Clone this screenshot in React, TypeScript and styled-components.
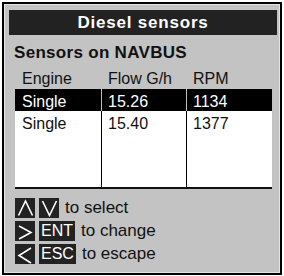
import React from "react";
import styled, { createGlobalStyle } from "styled-components";

const GlobalStyle = createGlobalStyle`
  html, body {
    margin: 0;
    padding: 0;
    background: #ffffff;
  }
  body {
    font-family: "Liberation Sans", Arial, sans-serif;
  }
`;

const COLS = "86px 85px 86px";

const Frame = styled.div`
  box-sizing: border-box;
  margin: 2px 0 0 2px;
  width: 280px;
  height: 273px;
  border: 2px solid #000;
  background: #c3c3c3;
  box-shadow: inset 0 0 0 1px #e4e4e4;
  padding: 6px 3px 0 5px;
  display: flex;
  flex-direction: column;
`;

const TitleBar = styled.div`
  height: 25px;
  background: #222;
  color: #fff;
  font-weight: bold;
  font-size: 17px;
  letter-spacing: 0.8px;
  display: flex;
  align-items: center;
  justify-content: center;
`;

const Heading = styled.div`
  margin: 8px 0 0 5px;
  font-size: 17px;
  font-weight: bold;
  letter-spacing: 0.3px;
  line-height: 20px;
  color: #111;
`;

const HeaderRow = styled.div`
  display: grid;
  grid-template-columns: ${COLS};
  margin: 7px 5px 0 6px;
  height: 19px;
  font-size: 16px;
  line-height: 18px;
  color: #111;
`;

const HeaderCell = styled.div`
  padding-left: 7px;
`;

const Table = styled.div`
  box-sizing: border-box;
  margin: 0 5px 0 6px;
  height: 100px;
  background: #fff;
  border-bottom: 2px solid #111;
  display: flex;
  flex-direction: column;
`;

const Row = styled.div<{ $selected?: boolean; $fill?: boolean }>`
  display: grid;
  grid-template-columns: ${COLS};
  height: ${(p) => (p.$fill ? "auto" : "22px")};
  flex: ${(p) => (p.$fill ? 1 : "none")};
  background: ${(p) => (p.$selected ? "#000" : "#fff")};
  color: ${(p) => (p.$selected ? "#fff" : "#111")};
  font-size: 16px;
  line-height: 18px;
`;

const Cell = styled.div<{ $first?: boolean; $selected?: boolean }>`
  padding: 4px 0 0 ${(p) => (p.$first ? "7px" : "6px")};
  border-left: ${(p) =>
    p.$first ? "none" : `1px solid ${p.$selected ? "#bdbdbd" : "#000"}`};
`;

const Legend = styled.div`
  margin: 9px 0 0 6px;
  display: flex;
  flex-direction: column;
  gap: 3px;
`;

const LegendRow = styled.div`
  display: flex;
  align-items: center;
  gap: 4px;
  height: 20px;
`;

const Key = styled.div`
  box-sizing: border-box;
  min-width: 20px;
  height: 20px;
  padding: 0 2px;
  background: #222;
  color: #fff;
  font-size: 16px;
  line-height: 20px;
  display: flex;
  align-items: center;
  justify-content: center;
`;

const IconKey = styled(Key)`
  padding: 0;
  width: 20px;
`;

const LegendText = styled.span`
  margin-left: 2px;
  font-size: 17px;
  line-height: 20px;
  color: #111;
`;

const Chevron: React.FC<{ points: string }> = ({ points }) => (
  <svg width="20" height="20" viewBox="0 0 20 20" style={{ display: "block" }}>
    <polyline
      points={points}
      fill="none"
      stroke="#fff"
      strokeWidth="1.6"
      strokeLinejoin="miter"
    />
  </svg>
);

const rows = [
  { engine: "Single", flow: "15.26", rpm: "1134", selected: true },
  { engine: "Single", flow: "15.40", rpm: "1377", selected: false },
];

export default function App() {
  return (
    <>
      <GlobalStyle />
      <Frame>
        <TitleBar>Diesel sensors</TitleBar>
        <Heading>Sensors on NAVBUS</Heading>
        <HeaderRow>
          <HeaderCell>Engine</HeaderCell>
          <HeaderCell>Flow G/h</HeaderCell>
          <HeaderCell>RPM</HeaderCell>
        </HeaderRow>
        <Table>
          {rows.map((r, i) => (
            <Row key={i} $selected={r.selected}>
              <Cell $first $selected={r.selected}>{r.engine}</Cell>
              <Cell $selected={r.selected}>{r.flow}</Cell>
              <Cell $selected={r.selected}>{r.rpm}</Cell>
            </Row>
          ))}
          <Row $fill>
            <Cell $first />
            <Cell />
            <Cell />
          </Row>
        </Table>
        <Legend>
          <LegendRow>
            <IconKey>
              <Chevron points="3.5,17.5 10.5,3 17.5,17.5" />
            </IconKey>
            <IconKey>
              <Chevron points="3.5,3 10.5,17.5 17.5,3" />
            </IconKey>
            <LegendText>to select</LegendText>
          </LegendRow>
          <LegendRow>
            <IconKey>
              <Chevron points="4,5 16,11.5 4,18" />
            </IconKey>
            <Key>ENT</Key>
            <LegendText>to change</LegendText>
          </LegendRow>
          <LegendRow>
            <IconKey>
              <Chevron points="16,4 4,11.5 16,19" />
            </IconKey>
            <Key>ESC</Key>
            <LegendText>to escape</LegendText>
          </LegendRow>
        </Legend>
      </Frame>
    </>
  );
}
